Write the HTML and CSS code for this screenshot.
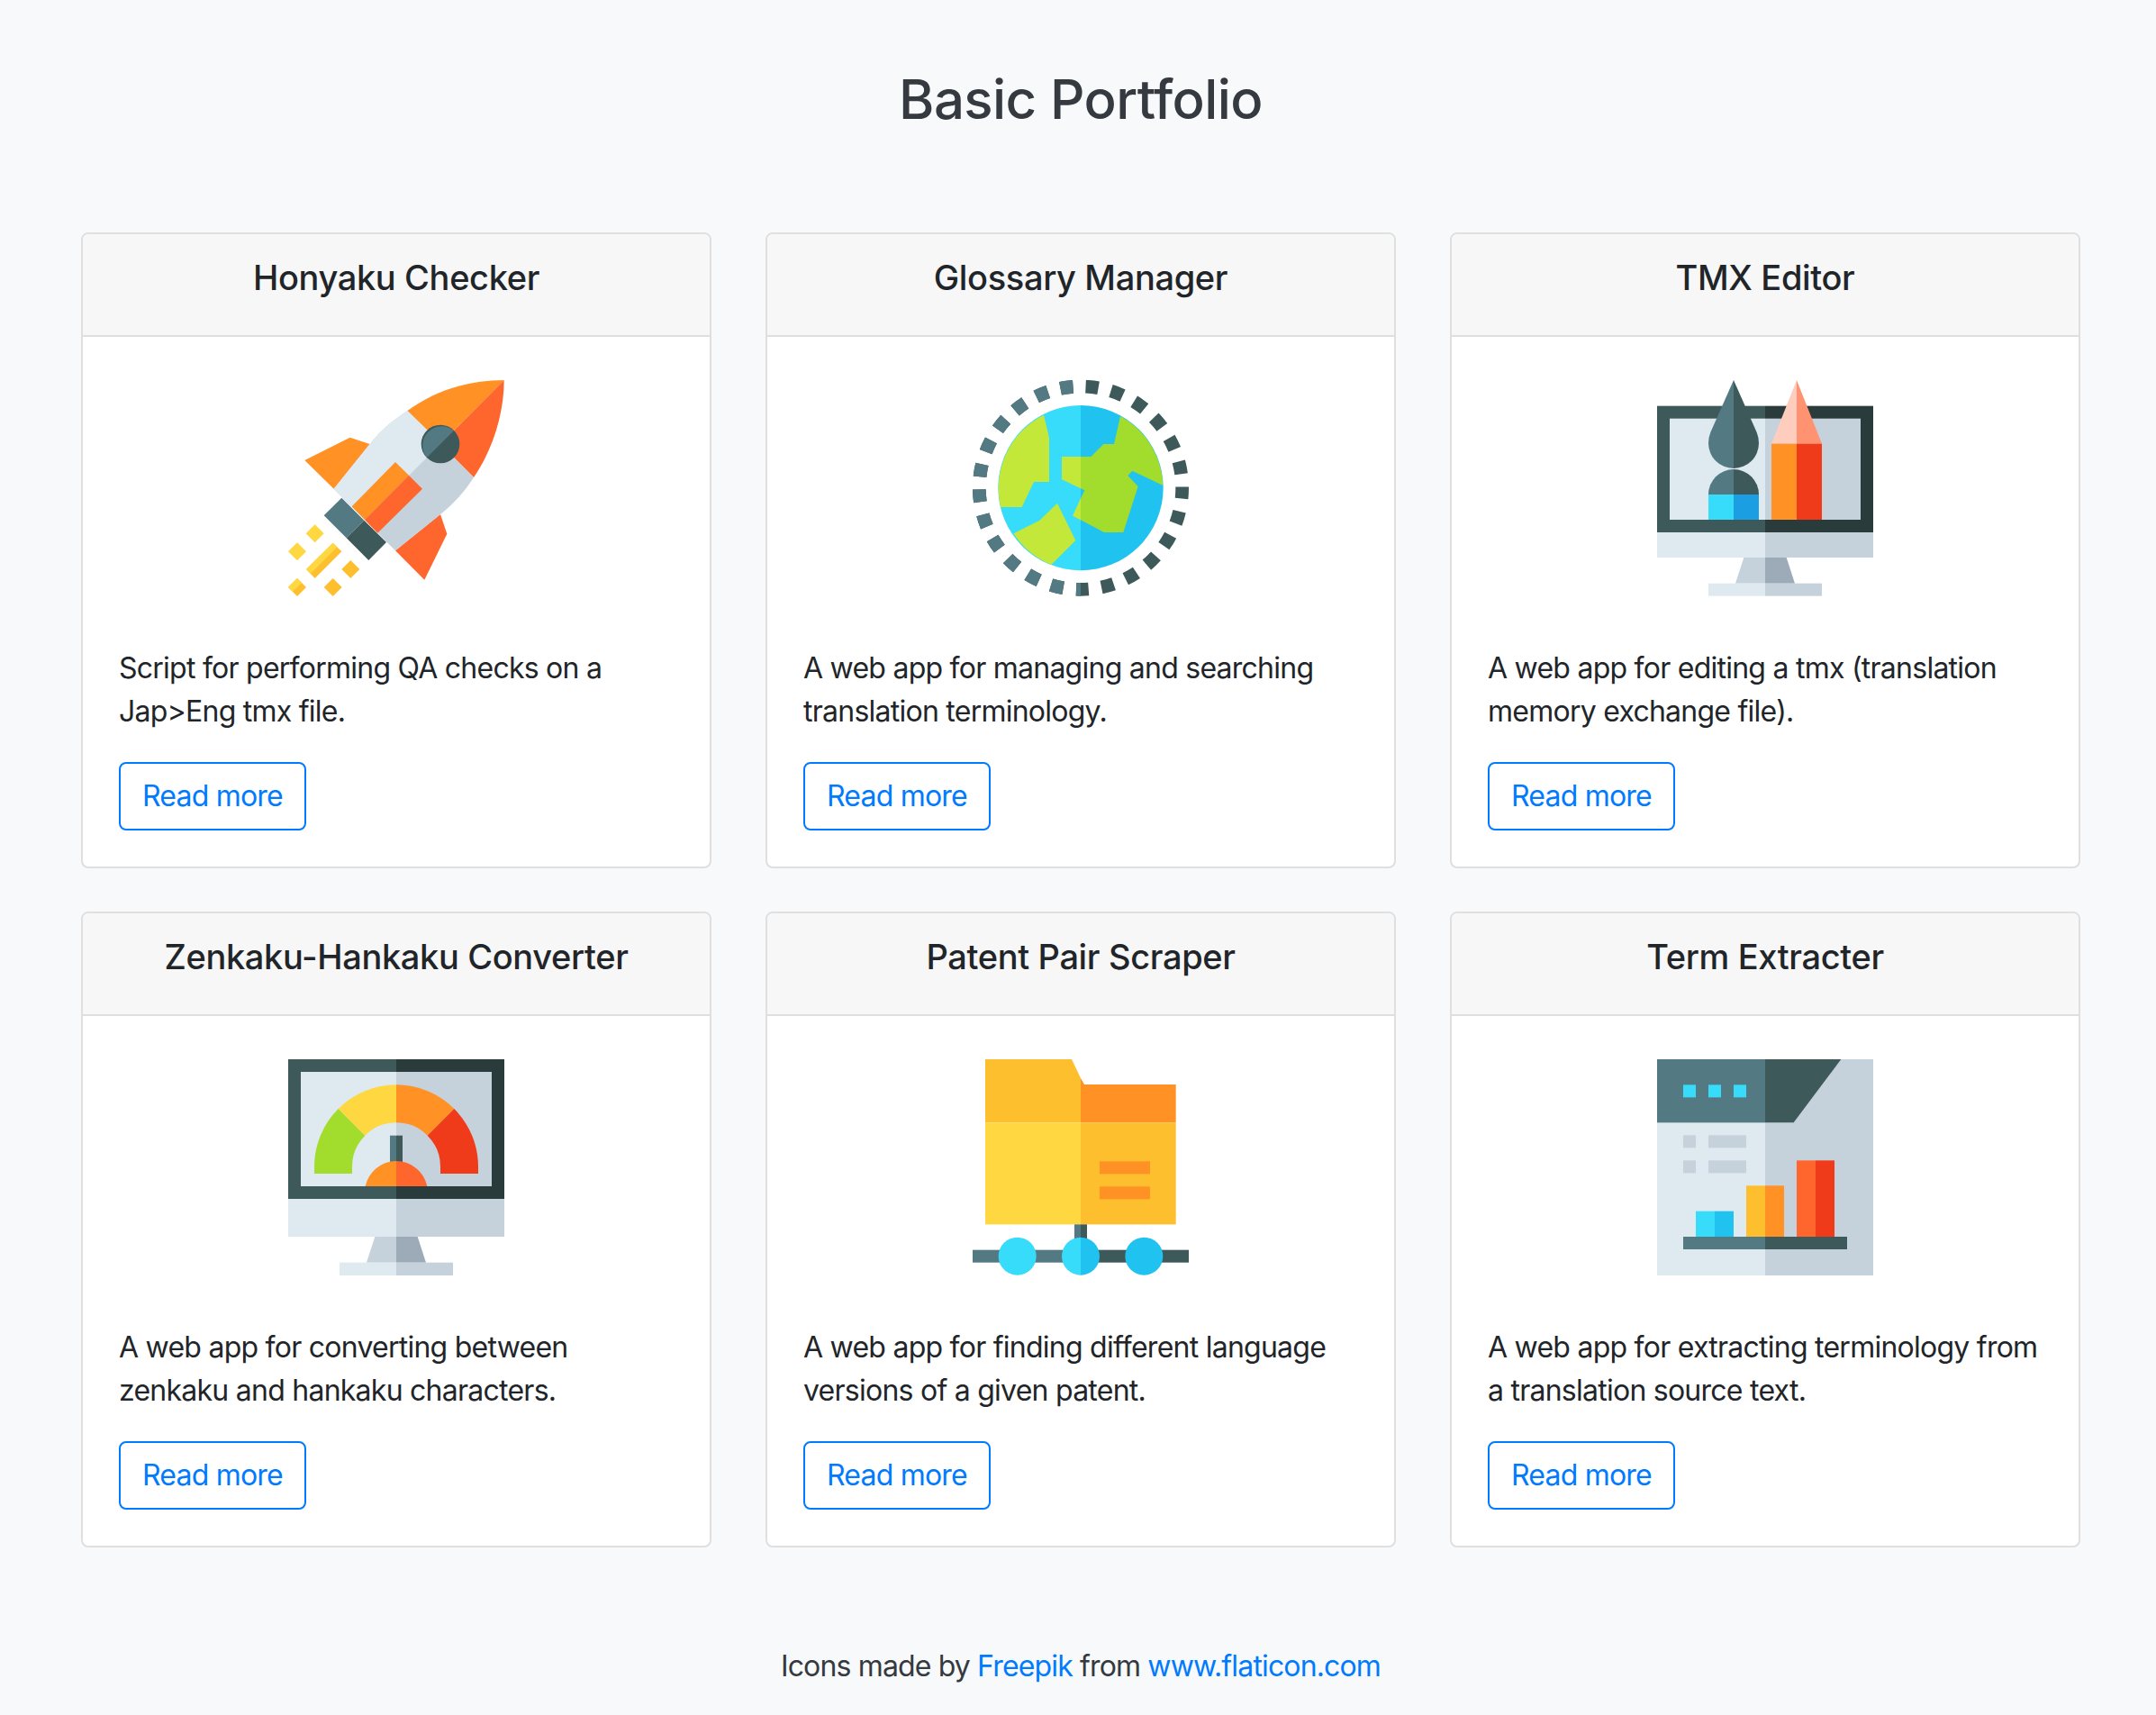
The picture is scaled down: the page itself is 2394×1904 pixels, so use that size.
FILE: index.html
```html
<!DOCTYPE html>
<html lang="en">

<head>
  <meta charset="UTF-8">
  <meta name="viewport" content="width=device-width, initial-scale=1.0">
  <title>Basic Portfolio</title>
  <link rel="stylesheet" href="styles.css">
</head>

<body>
  <h1 class="page-title">Basic Portfolio</h1>
  <main class="cards">

    <section class="card">
      <h4 class="card-header">Honyaku Checker</h4>
      <div class="card-body">
        <svg class="icon" viewBox="90 66 720 720">
          <path class="orange" d="M145 333L296 257L362 279L242 428Z" />
          <path class="red" d="M597 513L619 578L544 731L447 634Z" />
          <path class="orange" d="M809 66C690 66 580 100 487 168L552 232L640 236Z" />
          <path class="red" d="M809 66C809 180 770 300 708 390L640 322L640 236Z" />
          <path class="grey" d="M487 168C440 200 400 230 362 279L242 428L447 634L597 513C640 480 680 435 708 390L640 322L552 232Z" />
          <path class="pale" d="M487 168C440 200 400 230 362 279L242 428L345 531L597 279L552 232Z" />
          <path class="orange" d="M447 339L492 383L345 531L302 487Z" />
          <path class="red" d="M492 383L537 428L388 575L345 531Z" />
          <path class="slate" d="M268 458L343 533L284 592L209 517Z" />
          <path class="dark" d="M343 533L417 606L358 666L284 592Z" />
          <circle class="dark" cx="597" cy="279" r="64" />
          <path class="slate" d="M642 234A64 64 0 0 0 552 324Z" />
          <path class="yellow" d="M179 547L209 577L179 607L149 577Z" />
          <path class="yellow" d="M120 607L150 637L120 667L90 637Z" />
          <path class="amber" d="M298 666L328 696L298 726L268 696Z" />
          <path class="amber" d="M239 726L269 756L239 786L209 756Z" />
          <path class="amber" d="M120 726L150 756L120 786L90 756Z" />
          <path class="yellow" d="M120 726L135 741L105 771L90 756Z" />
          <path class="amber" d="M239 608L268 637L179 726L150 696Z" />
          <path class="yellow" d="M239 608L254 622L164 711L150 696Z" />
        </svg>
        <p class="card-text">Script for performing QA checks on a Jap&gt;Eng tmx file.</p>
        <a class="btn" href="#">Read more</a>
      </div>
    </section>

    <section class="card">
      <h4 class="card-header">Glossary Manager</h4>
      <div class="card-body">
        <svg class="icon" viewBox="90 66 720 720">
          <clipPath id="globe-left"><rect x="90" y="66" width="360" height="720" /></clipPath>
          <circle class="ring ring-dark" cx="450" cy="425" r="338" />
          <circle class="ring ring-slate" cx="450" cy="425" r="338" clip-path="url(#globe-left)" />
          <path class="sky" d="M450 150A275 275 0 0 0 450 700Z" />
          <path class="cyan" d="M450 150A275 275 0 0 1 450 700Z" />
          <path class="lime" d="M327 182L345 258L345 405L294 405L254 489L183 489A275 275 0 0 1 327 182Z" />
          <path class="lime" d="M372 476L433 600L352 681A275 275 0 0 1 226 577L312 534Z" />
          <path class="green" d="M450 321L484 321L526 279L561 279L582 186A275 275 0 0 1 724 417L622 368L607 384L641 420L592 573L528 573L450 532L450 460L463 433L450 427Z" />
          <path class="lime" d="M387 321L450 321L450 427L387 397Z" />
          <path class="lime" d="M450 460L423 518L450 532Z" />
        </svg>
        <p class="card-text">A web app for managing and searching translation terminology.</p>
        <a class="btn" href="#">Read more</a>
      </div>
    </section>

    <section class="card">
      <h4 class="card-header">TMX Editor</h4>
      <div class="card-body">
        <svg class="icon" viewBox="90 66 720 720">
          <rect class="dark" x="90" y="152" width="360" height="421" />
          <rect class="night" x="450" y="152" width="360" height="421" />
          <rect class="pale" x="132" y="194" width="318" height="337" />
          <rect class="grey" x="450" y="194" width="318" height="337" />
          <rect class="pale" x="90" y="573" width="360" height="84" />
          <rect class="grey" x="450" y="573" width="360" height="84" />
          <path class="grey" d="M379 657L450 657L450 743L351 743Z" />
          <path class="steel" d="M450 657L521 657L549 743L450 743Z" />
          <rect class="pale" x="261" y="743" width="189" height="42" />
          <rect class="grey" x="450" y="743" width="189" height="42" />
          <path class="slate" d="M345 66L268 240Q261 258 261 276A84 84 0 0 0 345 360Z" />
          <path class="dark" d="M345 66L422 240Q429 258 429 276A84 84 0 0 1 345 360Z" />
          <path class="slate" d="M261 447A84 84 0 0 1 345 363L345 447Z" />
          <path class="dark" d="M429 447A84 84 0 0 0 345 363L345 447Z" />
          <rect class="sky" x="261" y="447" width="84" height="84" />
          <rect class="blue" x="345" y="447" width="84" height="84" />
          <path class="peach" d="M555 66L471 278L555 278Z" />
          <path class="salmon" d="M555 66L639 278L555 278Z" />
          <rect class="orange" x="471" y="278" width="84" height="253" />
          <rect class="scarlet" x="555" y="278" width="84" height="253" />
        </svg>
        <p class="card-text">A web app for editing a tmx (translation memory exchange file).</p>
        <a class="btn" href="#">Read more</a>
      </div>
    </section>

    <section class="card">
      <h4 class="card-header">Zenkaku-Hankaku Converter</h4>
      <div class="card-body">
        <svg class="icon" viewBox="60 78 720 720">
          <rect class="dark" x="60" y="78" width="360" height="465" />
          <rect class="night" x="420" y="78" width="360" height="465" />
          <rect class="pale" x="102" y="120" width="318" height="381" />
          <rect class="grey" x="420" y="120" width="318" height="381" />
          <rect class="pale" x="60" y="543" width="360" height="126" />
          <rect class="grey" x="420" y="543" width="360" height="126" />
          <path class="grey" d="M349 669L420 669L420 755L321 755Z" />
          <path class="steel" d="M420 669L491 669L519 755L420 755Z" />
          <rect class="pale" x="231" y="755" width="189" height="43" />
          <rect class="grey" x="420" y="755" width="189" height="43" />
          <path class="green" d="M147 459L147 436A273 273 0 0 1 227 243L316 332A147 147 0 0 0 273 436L273 459Z" />
          <path class="yellow" d="M227 243A273 273 0 0 1 420 163L420 289A147 147 0 0 0 316 332Z" />
          <path class="orange" d="M420 163A273 273 0 0 1 613 243L524 332A147 147 0 0 0 420 289Z" />
          <path class="scarlet" d="M613 243A273 273 0 0 1 693 436L693 459L567 459L567 436A147 147 0 0 0 524 332Z" />
          <rect class="slate" x="399" y="332" width="21" height="90" />
          <rect class="dark" x="420" y="332" width="21" height="90" />
          <path class="orange" d="M317 501A105 105 0 0 1 420 417L420 501Z" />
          <path class="red" d="M523 501A105 105 0 0 0 420 417L420 501Z" />
        </svg>
        <p class="card-text">A web app for converting between zenkaku and hankaku characters.</p>
        <a class="btn" href="#">Read more</a>
      </div>
    </section>

    <section class="card">
      <h4 class="card-header">Patent Pair Scraper</h4>
      <div class="card-body">
        <svg class="icon" viewBox="90 78 720 720">
          <path class="amber" d="M132 78L420 78L450 141L450 289L132 289Z" />
          <path class="orange" d="M450 141L462 162L767 162L767 289L450 289Z" />
          <rect class="yellow" x="132" y="289" width="318" height="339" />
          <rect class="amber" x="450" y="289" width="317" height="339" />
          <rect class="orange" x="513" y="418" width="168" height="42" />
          <rect class="orange" x="513" y="502" width="168" height="42" />
          <rect class="slate" x="429" y="628" width="21" height="60" />
          <rect class="dark" x="450" y="628" width="21" height="60" />
          <rect class="slate" x="90" y="713" width="360" height="42" />
          <rect class="dark" x="450" y="713" width="360" height="42" />
          <circle class="sky" cx="239" cy="734" r="63" />
          <path class="sky" d="M450 671A63 63 0 0 0 450 797Z" />
          <path class="cyan" d="M450 671A63 63 0 0 1 450 797Z" />
          <circle class="cyan" cx="661" cy="734" r="63" />
        </svg>
        <p class="card-text">A web app for finding different language versions of a given patent.</p>
        <a class="btn" href="#">Read more</a>
      </div>
    </section>

    <section class="card">
      <h4 class="card-header">Term Extracter</h4>
      <div class="card-body">
        <svg class="icon" viewBox="90 78 720 720">
          <rect class="pale" x="90" y="78" width="360" height="720" />
          <rect class="grey" x="450" y="78" width="360" height="720" />
          <rect class="slate" x="90" y="78" width="360" height="211" />
          <path class="dark" d="M450 78L703 78L545 289L450 289Z" />
          <rect class="sky" x="177" y="163" width="42" height="42" />
          <rect class="sky" x="261" y="163" width="42" height="42" />
          <rect class="sky" x="345" y="163" width="42" height="42" />
          <rect class="grey" x="177" y="331" width="42" height="42" />
          <rect class="grey" x="261" y="331" width="126" height="42" />
          <rect class="grey" x="177" y="415" width="42" height="42" />
          <rect class="grey" x="261" y="415" width="126" height="42" />
          <rect class="sky" x="219" y="584" width="63" height="85" />
          <rect class="cyan" x="282" y="584" width="63" height="85" />
          <rect class="amber" x="387" y="499" width="63" height="170" />
          <rect class="orange" x="450" y="499" width="63" height="170" />
          <rect class="red" x="555" y="415" width="63" height="254" />
          <rect class="scarlet" x="618" y="415" width="63" height="254" />
          <rect class="slate" x="177" y="669" width="273" height="42" />
          <rect class="dark" x="450" y="669" width="273" height="42" />
        </svg>
        <p class="card-text">A web app for extracting terminology from a translation source text.</p>
        <a class="btn" href="#">Read more</a>
      </div>
    </section>

  </main>
  <footer class="credits">Icons made by <a href="#">Freepik</a> from <a href="#">www.flaticon.com</a></footer>
</body>

</html>
```

FILE: styles.css
```css
body {
  margin: 0;
  background-color: #f8f9fa;
  color: #212529;
  font-family: Inter, "Liberation Sans", sans-serif;
  font-size: 32px;
  letter-spacing: -0.8px;
  line-height: 48px;
}

a {
  color: #007bff;
  text-decoration: none;
}

.page-title {
  margin: 0;
  padding: 74px 0 112px 6px;
  color: #343a40;
  font-size: 60px;
  font-weight: 550;
  letter-spacing: -0.6px;
  line-height: 72px;
  text-align: center;
}

.cards {
  display: grid;
  grid-template-columns: repeat(3, 700px);
  gap: 48px 60px;
  padding-left: 90px;
}

.card {
  border: 2px solid #dfdfdf;
  border-radius: 8px;
  background-color: white;
  overflow: hidden;
}

.card-header {
  margin: 0;
  padding: 25px 40px 41px;
  border-bottom: 2px solid #dfdfdf;
  background-color: #f7f7f7;
  font-size: 38px;
  font-weight: 500;
  letter-spacing: -0.35px;
  line-height: 46px;
  text-align: center;
}

.card-body {
  padding: 48px 40px 40px;
}

.icon {
  display: block;
  width: 240px;
  height: 240px;
  margin: 0 auto 56px;
}

.card-text {
  margin: 0 0 32px;
  letter-spacing: -0.75px;
}

.btn {
  display: inline-block;
  padding: 12px 24px;
  border: 2px solid #007bff;
  border-radius: 8px;
}

.credits {
  padding: 108px 0 18px 6px;
  color: #343a40;
  letter-spacing: -0.85px;
  text-align: center;
}

/* icon colours */
.orange { fill: #ff9125; }
.red { fill: #ff662d; }
.scarlet { fill: #ef3b1a; }
.yellow { fill: #ffd740; }
.amber { fill: #fdbf2d; }
.pale { fill: #deeaf0; }
.grey { fill: #c5d2db; }
.steel { fill: #9dabb8; }
.slate { fill: #537983; }
.dark { fill: #3e5959; }
.night { fill: #2a3b3b; }
.sky { fill: #36dcf9; }
.cyan { fill: #20c2f0; }
.blue { fill: #1b9ee2; }
.lime { fill: #c3e83a; }
.green { fill: #a2dc2c; }
.peach { fill: #ffcdbe; }
.salmon { fill: #ff9270; }

.ring {
  fill: none;
  stroke-width: 44;
  stroke-dasharray: 42 42.96;
  stroke-dashoffset: 6;
}

.ring-dark { stroke: #3e5959; }
.ring-slate { stroke: #537983; }
```
